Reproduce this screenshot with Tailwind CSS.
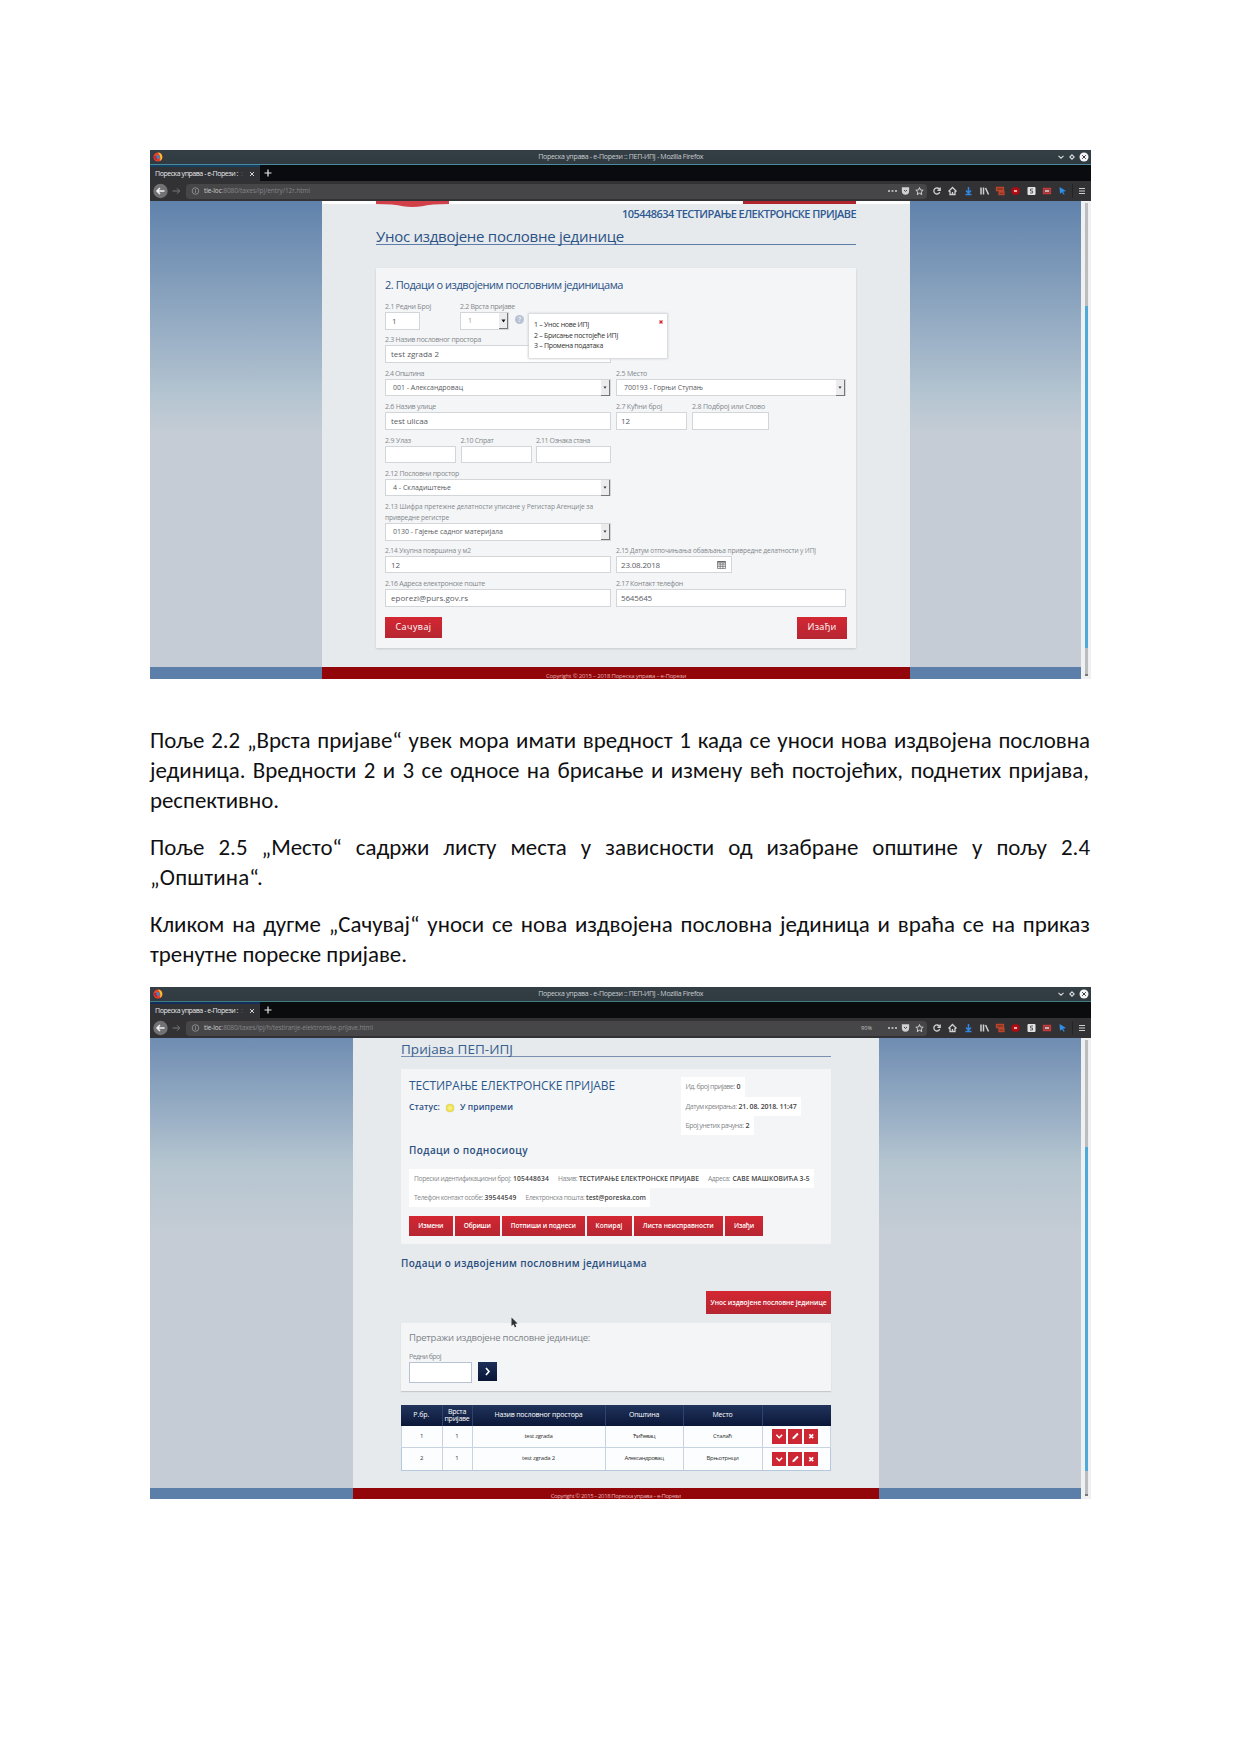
<!DOCTYPE html>
<html lang="ru">
<head>
<meta charset="utf-8">
<title>Упутство</title>
<script src="https://cdn.jsdelivr.net/npm/@tailwindcss/browser@4"></script>
</head>
<body class="bg-white">
<svg class="hidden">
  <symbol id="tools" viewBox="0 0 210 20">
    <g fill="none" stroke="#d0d0d2" stroke-width="1.3">
      <path d="M3 10h2M6.500 10h2M10 10h2" stroke-width="1.600"/>
      <path d="M17.500 7h6v3a3 3 0 0 1-6 0z" fill="#d0d0d2"/><path d="M19 9l1.500 1.500L22 9" stroke="#444" stroke-width="1"/>
      <path d="M34.500 6.500l1 2.500 2.700.2-2 1.800.6 2.600-2.300-1.400-2.300 1.400.6-2.600-2-1.800 2.700-.2z" stroke-width="1"/>
      <path d="M54.500 8.500a3 3 0 1 0 .2 2.500M55.200 6.500v2.800h-2.800"/>
      <path d="M63.500 10.500L67.500 6.500l4 4M65 10v3.500h5V10M67.500 13.500v-2.500"/>
      <path d="M83.500 6v6M81 9.500l2.500 2.700L86 9.500M80.500 13.500h6" stroke="#3385e0" stroke-width="1.500"/>
      <path d="M96 6.500v7M98.500 6.500v7M100.500 7l3 6.500" stroke-width="1.500"/>
      <path d="M111.500 6.500h7v3h-7zM114 11h5v2.500h-5z" stroke="#b8452c" fill="#83321f"/>
      <path d="M128.500 7h4l1.500 1.500v3l-1.500 1.500h-4l-1.500-1.500v-3z" stroke="#a80d12" fill="#b90d15"/><path d="M129 10h3" stroke="#fff"/>
      <rect x="142.500" y="6" width="8" height="8" rx="1" fill="#e3e3e5" stroke="none"/><path d="M148 8h-2.500v2h2v2H145" stroke="#555" stroke-width=".9"/>
      <path d="M158.500 7.500h7v5h-7z" stroke="#c23a3a" fill="#8d3b40"/><path d="M160 10h4" stroke="#eee"/>
      <path d="M174.500 6l6.500 4-3 .7 1.700 2.600-1 .5-1.700-2.500-2 1.500z" fill="#2f90e8" stroke="none"/>
      <path d="M187.500 3v14" stroke="#242426" stroke-width="1"/>
      <path d="M194 7.500h6M194 10h6M194 12.500h6" stroke-width="1.200"/>
    </g>
  </symbol>
  <symbol id="fox" viewBox="0 0 10 10"><circle cx="5" cy="5" r="4.600" fill="#e5452c"/><path d="M5 .6a4.400 4.400 0 0 1 2 8.200C8 6 7 3 5 .6z" fill="#f7c32e"/><circle cx="4.800" cy="5" r="2.100" fill="#4c7fb8"/><path d="M1 4c0 4 3 5 5 4-2 0-3-2-2.600-4z" fill="#c3202f"/></symbol>
  <symbol id="wm" viewBox="0 0 34 12"><path d="M1.500 4.800L4 7.200l2.500-2.400" fill="none" stroke="#d8dbdd" stroke-width="1.100"/><path d="M15 3.800L17.200 6 15 8.200 12.800 6z" fill="none" stroke="#d8dbdd" stroke-width="1.100"/><circle cx="27" cy="6" r="4.500" fill="#f5f5f5"/><path d="M25.200 4.200l3.600 3.600M28.800 4.200l-3.600 3.600" stroke="#333b41" stroke-width="1"/></symbol>
  <symbol id="nav" viewBox="0 0 62 20"><circle cx="10.500" cy="10" r="7.200" fill="#727274"/><path d="M14.500 10H7M10 7l-3 3 3 3" fill="none" stroke="#f2f2f2" stroke-width="1.500"/><path d="M22.500 10h7M27 7.300l2.700 2.700-2.700 2.700" fill="none" stroke="#77777a" stroke-width="1"/></symbol>
  <symbol id="bdown" viewBox="0 0 15 15"><path d="M4.500 6l3 3 3-3" fill="none" stroke="#fff" stroke-width="1.600"/></symbol>
  <symbol id="bedit" viewBox="0 0 15 15"><path d="M4.500 10.500l.5-2 4.500-4.500 1.500 1.500L6.500 10z" fill="#fff"/></symbol>
  <symbol id="bx" viewBox="0 0 15 15"><path d="M5.500 5.500l4 4M9.500 5.500l-4 4" stroke="#fff" stroke-width="1.700"/></symbol>
</svg>

<main class="w-[1241px] h-[1754px] overflow-hidden pt-[150px] pl-[150px] font-['Open_Sans','Noto_Sans',sans-serif]">

<!-- First browser window -->
<section class="w-[941px] h-[529px] overflow-hidden flex flex-col">
  <header class="h-[15px] shrink-0 bg-linear-to-b from-[#343f46] to-[#303a40] border-b border-[#4b8ba0] flex items-center justify-between">
    <svg class="w-[10px] h-[10px] ml-[2.500px]"><use href="#fox"/></svg>
    <span data-w="165" class="text-[7px] text-[#c9cdd0] whitespace-nowrap ml-[22px] pt-px">Пореска управа - е-Порези :: ПЕП-ИПЈ - Mozilla Firefox</span>
    <svg class="w-[34px] h-[12px]"><use href="#wm"/></svg>
  </header>
  <div class="h-[16px] shrink-0 bg-[#0a0b0f] flex items-center">
    <div class="w-[110px] h-full bg-[#303236] border-t-2 border-[#16405f] flex items-center pl-[5px] text-[7px] text-[#e8e8ea]"><span data-w="83" class="whitespace-nowrap">Пореска управа - е-Порези :</span><span class="text-[#666] ml-[3px]">:</span><svg class="w-[6px] h-[6px] ml-[6px]" viewBox="0 0 6 6"><path d="M1 1l4 4M5 1L1 5" stroke="#d5d5d5"/></svg></div>
    <svg class="w-[8px] h-[8px] ml-[4px]" viewBox="0 0 8 8"><path d="M4 .5v7M.5 4h7" stroke="#e8e8e8" stroke-width="1.200"/></svg>
  </div>
  <div class="h-[20px] shrink-0 bg-[#323234] flex items-center">
    <div class="w-[36px] h-full shrink-0 overflow-hidden"><svg class="w-[62px] h-[20px]"><use href="#nav"/></svg></div>
    <div class="h-[15px] w-[741px] shrink-0 rounded-sm bg-[#464648] flex items-center overflow-hidden"><svg class="w-[18px] h-[20px] shrink-0" viewBox="36 0 18 20"><circle cx="45.500" cy="10" r="3.300" fill="none" stroke="#9b9b9d" stroke-width=".8"/><path d="M45.500 9.500v2.200M45.500 8v.8" stroke="#9b9b9d" stroke-width=".9"/></svg><span data-w="106" class="text-[6.500px] text-[#858588] whitespace-nowrap"><b class="text-[#d0d0d2] font-normal">tie-loc</b>:8080/taxes/ipj/entry/12r.html</span></div>
    <svg class="w-[210px] h-[20px] -ml-[42px] shrink-0"><use href="#tools"/></svg>
  </div>
  <div class="flex-1 flex min-h-0">
    <div class="w-[172px] flex flex-col"><div class="h-[466px] bg-linear-to-b from-[#6082ab] via-[#b5c5d1] via-42% to-[#c5ccd5] to-50%"></div><div class="flex-1 bg-[#5b7fa9]"></div></div>
    <div class="w-[588px] bg-[#e6eaed] flex flex-col">
      <div class="h-[3px] shrink-0 bg-white px-[54px] flex justify-between"><svg class="w-[73px] h-[6px] shrink-0" viewBox="0 0 73 6"><path d="M0 0h73v3Q55 3 46 5.200Q36.500 6.800 27 5.200Q18 3 0 3z" fill="#d13f48"/></svg><div class="w-[113px] bg-[#b2242d]"></div></div>
      <div class="h-[18px] px-[54px] text-right text-[11px] leading-[20px] font-semibold text-[#2f5a92] whitespace-nowrap"><span data-w="234">105448634 ТЕСТИРАЊЕ ЕЛЕКТРОНСКЕ ПРИЈАВЕ</span></div>
      <h1 class="h-[23px] mx-[54px] border-b-[1.500px] border-[#5c7ea8] text-[15px] leading-[28px] text-[#2b5286] whitespace-nowrap"><span data-w="248">Унос издвојене пословне јединице</span></h1>
      <form class="relative mt-[23px] mx-[54px] w-[480px] h-[380px] shrink-0 bg-[#f3f5f7] shadow-[0_1px_2px_#0002] px-[9px] flex flex-col text-[#5a5c5f]">
        <h2 class="h-[33px] shrink-0 text-[11px] leading-[33px] text-[#2b5286] whitespace-nowrap font-medium"><span data-w="238">2. Подаци о издвојеним пословним јединицама</span></h2>
        <div class="h-[33.400px] shrink-0 flex">
          <div class="w-[75px]"><div class="h-[11px] text-[7px] leading-[11px] text-[#85888c] whitespace-nowrap"><span data-w="46">2.1 Редни Број</span></div><div class="w-[35px] h-[17.500px] bg-white border border-[#d3d6d9] text-[8px] leading-[16px] pl-[6px]">1</div></div>
          <div class="w-[49px]"><div class="h-[11px] text-[7px] leading-[11px] text-[#85888c] whitespace-nowrap"><span data-w="55">2.2 Врста пријаве</span></div><div class="w-[49px] h-[17.500px] bg-white border border-[#d3d6d9] text-[7px] leading-[15px] pl-[7px] flex justify-between text-[#999]">1<i class="w-[9px] h-[16px] bg-[#ececee] border-r border-b border-[#777] flex items-center justify-center"><svg class="w-[5px] h-[4px]" viewBox="0 0 5 4"><path d="M.5.5h4L2.500 3.500z" fill="#111"/></svg></i></div></div>
          <i class="not-italic w-[9px] h-[9px] ml-[6px] mt-[14px] rounded-full bg-[#b9c2d5] text-white text-[7px] leading-[9px] text-center">?</i>
        </div>
        <div class="h-[33.400px] shrink-0"><div class="h-[11px] text-[7px] leading-[11px] text-[#85888c]"><span data-w="96">2.3 Назив пословног простора</span></div><div class="w-[226px] h-[17.500px] bg-white border border-[#d3d6d9] text-[8px] leading-[16px] pl-[5px]"><span data-w="48">test zgrada 2</span></div></div>
        <div class="h-[33.400px] shrink-0 flex gap-[5px]">
          <div class="w-[226px]"><div class="h-[11px] text-[7px] leading-[11px] text-[#85888c]"><span data-w="39">2.4 Општина</span></div><div class="h-[17.500px] bg-white border border-[#d3d6d9] text-[7px] leading-[16px] pl-[7px] flex justify-between"><span data-w="70">001 - Александровац</span><i class="w-[9px] h-[16px] bg-[#ececee] border-r border-b border-[#777] flex items-center justify-center"><svg class="w-[4px] h-[3px]" viewBox="0 0 5 4"><path d="M.5.5h4L2.500 3.500z" fill="#333"/></svg></i></div></div>
          <div class="w-[230px]"><div class="h-[11px] text-[7px] leading-[11px] text-[#85888c]"><span data-w="31">2.5 Место</span></div><div class="h-[17.500px] bg-white border border-[#d3d6d9] text-[7px] leading-[16px] pl-[7px] flex justify-between"><span data-w="79">700193 - Горњи Ступањ</span><i class="w-[9px] h-[16px] bg-[#ececee] border-r border-b border-[#777] flex items-center justify-center"><svg class="w-[4px] h-[3px]" viewBox="0 0 5 4"><path d="M.5.5h4L2.500 3.500z" fill="#333"/></svg></i></div></div>
        </div>
        <div class="h-[33.400px] shrink-0 flex gap-[5px]">
          <div class="w-[226px]"><div class="h-[11px] text-[7px] leading-[11px] text-[#85888c]"><span data-w="51">2.6 Назив улице</span></div><div class="h-[17.500px] bg-white border border-[#d3d6d9] text-[8px] leading-[16px] pl-[5px]"><span data-w="37">test ulicaa</span></div></div>
          <div class="w-[71px]"><div class="h-[11px] text-[7px] leading-[11px] text-[#85888c]"><span data-w="46">2.7 Кућни број</span></div><div class="h-[17.500px] bg-white border border-[#d3d6d9] text-[8px] leading-[16px] pl-[4px]">12</div></div>
          <div class="w-[77px]"><div class="h-[11px] text-[7px] leading-[11px] text-[#85888c] whitespace-nowrap"><span data-w="73">2.8 Подброј или Слово</span></div><div class="h-[17.500px] bg-white border border-[#d3d6d9]"></div></div>
        </div>
        <div class="h-[33.400px] shrink-0 flex gap-[4.500px]">
          <div class="w-[71px]"><div class="h-[11px] text-[7px] leading-[11px] text-[#85888c]"><span data-w="26">2.9 Улаз</span></div><div class="h-[17.500px] bg-white border border-[#d3d6d9]"></div></div>
          <div class="w-[71px]"><div class="h-[11px] text-[7px] leading-[11px] text-[#85888c]"><span data-w="33">2.10 Спрат</span></div><div class="h-[17.500px] bg-white border border-[#d3d6d9]"></div></div>
          <div class="w-[75px]"><div class="h-[11px] text-[7px] leading-[11px] text-[#85888c]"><span data-w="54">2.11 Ознака стана</span></div><div class="h-[17.500px] bg-white border border-[#d3d6d9]"></div></div>
        </div>
        <div class="h-[33.400px] w-[226px] shrink-0"><div class="h-[11px] text-[7px] leading-[11px] text-[#85888c]"><span data-w="74">2.12 Пословни простор</span></div><div class="h-[17.500px] bg-white border border-[#d3d6d9] text-[7px] leading-[16px] pl-[7px] flex justify-between"><span data-w="58">4 - Складиштење</span><i class="w-[9px] h-[16px] bg-[#ececee] border-r border-b border-[#777] flex items-center justify-center"><svg class="w-[4px] h-[3px]" viewBox="0 0 5 4"><path d="M.5.5h4L2.500 3.500z" fill="#333"/></svg></i></div></div>
        <div class="h-[43.600px] w-[226px] shrink-0"><div class="h-[22px] text-[6.600px] leading-[11px] text-[#85888c] whitespace-nowrap"><span data-w="208">2.13 Шифра претежне делатности уписане у Регистар Агенције за</span><br><span data-w="64">привредне регистре</span></div><div class="h-[17.500px] bg-white border border-[#d3d6d9] text-[7px] leading-[16px] pl-[7px] flex justify-between"><span data-w="110">0130 - Гајење садног материјала</span><i class="w-[9px] h-[16px] bg-[#ececee] border-r border-b border-[#777] flex items-center justify-center"><svg class="w-[4px] h-[3px]" viewBox="0 0 5 4"><path d="M.5.5h4L2.500 3.500z" fill="#333"/></svg></i></div></div>
        <div class="h-[33.400px] shrink-0 flex gap-[5px]">
          <div class="w-[226px]"><div class="h-[11px] text-[6.600px] leading-[11px] text-[#85888c]"><span data-w="86">2.14 Укупна површина у м2</span></div><div class="h-[17.500px] bg-white border border-[#d3d6d9] text-[8px] leading-[16px] pl-[5px]">12</div></div>
          <div class="w-[230px]"><div class="h-[11px] text-[6.600px] leading-[11px] text-[#85888c] whitespace-nowrap"><span data-w="200">2.15 Датум отпочињања обављања привредне делатности у ИПЈ</span></div><div class="w-[116px] h-[17.500px] bg-white border border-[#d3d6d9] text-[8px] leading-[16px] pl-[4px] pr-[5px] flex justify-between items-center"><span data-w="39">23.08.2018</span><svg class="w-[9px] h-[9px]" viewBox="0 0 9 9"><path d="M.5 1.500h8v7h-8zM.5 3h8M.5 4.800h8M.5 6.600h8M3.200 3v5.500M5.900 3v5.500" fill="none" stroke="#68696c" stroke-width=".7"/><path d="M.5 1h8v1.500h-8z" fill="#68696c"/></svg></div></div>
        </div>
        <div class="h-[38.500px] shrink-0 flex gap-[5px]">
          <div class="w-[226px]"><div class="h-[11px] text-[7px] leading-[11px] text-[#85888c]"><span data-w="100">2.16 Адреса електронске поште</span></div><div class="h-[17.500px] bg-white border border-[#d3d6d9] text-[8px] leading-[16px] pl-[5px]"><span data-w="77">eporezi@purs.gov.rs</span></div></div>
          <div class="w-[230px]"><div class="h-[11px] text-[7px] leading-[11px] text-[#85888c]"><span data-w="67">2.17 Контакт телефон</span></div><div class="h-[17.500px] bg-white border border-[#d3d6d9] text-[8px] leading-[16px] pl-[4px]"><span data-w="31">5645645</span></div></div>
        </div>
        <div class="flex justify-between text-white font-medium text-[9px] leading-[20px]"><div class="w-[57px] h-[21px] bg-linear-to-b from-[#d42732] to-[#b52632] text-center"><span data-w="36">Сачувај</span></div><div class="w-[50px] h-[22px] bg-linear-to-b from-[#d42732] to-[#b52632] text-center"><span data-w="29">Изађи</span></div></div>
        <aside class="absolute left-[153px] top-[46px] w-[138px] h-[44px] bg-white shadow-[0_0_2px_1px_#cfd1d4] pl-[5px] pt-[6px] text-[7px] leading-[10.700px] text-[#333] whitespace-nowrap"><span data-w="55">1 – Унос нове ИПЈ</span><br><span data-w="84">2 – Брисање постојеће ИПЈ</span><br><span data-w="69">3 – Промена података</span><i class="absolute right-[4px] top-[6px] w-[4px] h-[4px] bg-[#d92e38] border border-[#efa0a5]"></i></aside>
      </form>
      <footer class="mt-[19px] flex-1 bg-[#92060a] text-center text-[6px] leading-[18px] text-[#e3b3b4] overflow-hidden whitespace-nowrap"><span data-w="140">Copyright © 2015 – 2018 Пореска управа – е-Порези</span></footer>
    </div>
    <div class="w-[171px] flex flex-col"><div class="h-[466px] bg-linear-to-b from-[#6082ab] via-[#b5c5d1] via-42% to-[#c5ccd5] to-50%"></div><div class="flex-1 bg-[#5b7fa9]"></div></div>
    <div class="w-[10px] bg-[#eff0f1] flex flex-col items-center pt-[2px] pb-[3px]"><div class="w-[3px] h-[103px] bg-[#bcbdbe]"></div><div class="w-[3px] h-[342px] bg-[#4faad8]"></div><div class="w-[3px] flex-1 bg-[#bcbdbe] border-b-2 border-[#777]"></div></div>
  </div>
</section>

<!-- Instructions -->
<article class="w-[940px] mt-[46px] h-[262px] font-['Carlito','Lato','Open_Sans',sans-serif] text-[22.900px] leading-[30px] text-[#101012] whitespace-nowrap">
  <p><span data-w="940" data-words="1">Поље 2.2 „Врста пријаве“ увек мора имати вредност 1 када се уноси нова издвојена пословна</span><br><span data-w="939" data-words="1">јединица. Вредности 2 и 3 се односе на брисање и измену већ постојећих, поднетих пријава,</span><br><span data-w="129">респективно.</span></p>
  <p class="mt-[17px]"><span data-w="940" data-words="1">Поље 2.5 „Место“ садржи листу места у зависности од изабране општине у пољу 2.4</span><br><span data-w="113">„Општина“.</span></p>
  <p class="mt-[17px]"><span data-w="940" data-words="1">Кликом на дугме „Сачувај“ уноси се нова издвојена пословна јединица и враћа се на приказ</span><br><span data-w="257">тренутне пореске пријаве.</span></p>
</article>

<!-- Second browser window -->
<section class="relative w-[941px] h-[512px] overflow-hidden flex flex-col">
  <header class="h-[15px] shrink-0 bg-linear-to-b from-[#343f46] to-[#303a40] border-b border-[#3c8083] flex items-center justify-between">
    <svg class="w-[10px] h-[10px] ml-[2.500px]"><use href="#fox"/></svg>
    <span data-w="165" class="text-[7px] text-[#c9cdd0] whitespace-nowrap ml-[22px] pt-px">Пореска управа - е-Порези :: ПЕП-ИПЈ - Mozilla Firefox</span>
    <svg class="w-[34px] h-[12px]"><use href="#wm"/></svg>
  </header>
  <div class="h-[16px] shrink-0 bg-[#0b0c0d] flex items-center">
    <div class="w-[110px] h-full bg-[#303236] border-t-2 border-[#152d5c] flex items-center pl-[5px] text-[7px] text-[#e8e8ea]"><span data-w="83" class="whitespace-nowrap">Пореска управа - е-Порези :</span><span class="text-[#666] ml-[3px]">:</span><svg class="w-[6px] h-[6px] ml-[6px]" viewBox="0 0 6 6"><path d="M1 1l4 4M5 1L1 5" stroke="#d5d5d5"/></svg></div>
    <svg class="w-[8px] h-[8px] ml-[4px]" viewBox="0 0 8 8"><path d="M4 .5v7M.5 4h7" stroke="#e8e8e8" stroke-width="1.200"/></svg>
  </div>
  <div class="h-[20px] shrink-0 bg-[#323234] flex items-center">
    <div class="w-[36px] h-full shrink-0 overflow-hidden"><svg class="w-[62px] h-[20px]"><use href="#nav"/></svg></div>
    <div class="h-[15px] w-[741px] shrink-0 rounded-sm bg-[#464648] flex items-center overflow-hidden"><svg class="w-[18px] h-[20px] shrink-0" viewBox="36 0 18 20"><circle cx="45.500" cy="10" r="3.300" fill="none" stroke="#9b9b9d" stroke-width=".8"/><path d="M45.500 9.500v2.200M45.500 8v.8" stroke="#9b9b9d" stroke-width=".9"/></svg><span data-w="169" class="text-[6.500px] text-[#858588] whitespace-nowrap"><b class="text-[#d0d0d2] font-normal">tie-loc</b>:8080/taxes/ipj/h/testiranje-elektronske-prijave.html</span><span data-w="11" class="ml-auto mr-[55px] text-[5.500px] text-[#c5c5c5]">90%</span></div>
    <svg class="w-[210px] h-[20px] -ml-[42px] shrink-0"><use href="#tools"/></svg>
  </div>
  <div class="flex-1 flex min-h-0">
    <div class="w-[202.500px] flex flex-col"><div class="h-[450px] bg-linear-to-b from-[#6f8db2] via-[#b5c5d0] via-28% to-[#c5ccd5] to-44%"></div><div class="flex-1 bg-[#5b7fa9]"></div></div>
    <div class="w-[526.500px] bg-[#e6eaed] flex flex-col">
      <h1 class="h-[19px] shrink-0 mx-[48.500px] border-b-[1.500px] border-[#7990b0] text-[13.500px] leading-[22px] text-[#37608f] whitespace-nowrap"><span data-w="112">Пријава ПЕП-ИПЈ</span></h1>
      <div class="mt-[12px] mx-[48.500px] w-[430px] h-[175px] shrink-0 bg-[#f3f5f7] px-[8px] flex flex-col">
        <div class="flex h-[100px] shrink-0">
          <div class="w-[272px]">
            <h2 class="h-[30px] pt-[7px] text-[12px] leading-[19px] text-[#2c578a] whitespace-nowrap"><span data-w="206">ТЕСТИРАЊЕ ЕЛЕКТРОНСКЕ ПРИЈАВЕ</span></h2>
            <div class="h-[17px] flex items-center text-[8.500px] font-semibold text-[#2b4f86] whitespace-nowrap"><span data-w="31">Статус:</span><i class="w-[8px] h-[8px] rounded-full ml-[6px] mr-[6px] bg-[radial-gradient(circle,#fff79a,#dccb12)] shadow-[0_0_1px_#aaa]"></i><span data-w="53">У припреми</span></div>
            <h3 class="mt-[25px] text-[10px] leading-[19px] font-semibold text-[#2b4f7f] whitespace-nowrap"><span data-w="119">Подаци о подносиоцу</span></h3>
          </div>
          <div class="pt-[8px] text-[7px] leading-[19px] text-[#85888b] whitespace-nowrap">
            <div class="w-[64px] h-[19.500px] bg-white pl-[4.500px] flex gap-[2px]"><span data-w="49">Ид. број пријаве:</span><b data-w="4" class="font-semibold text-[#444]">0</b></div>
            <div class="w-[120px] h-[19px] bg-white pl-[4.500px] flex gap-[2px]"><span data-w="51">Датум креирања:</span><b data-w="58" class="font-semibold text-[#444]">21. 08. 2018. 11:47</b></div>
            <div class="w-[73px] h-[19px] bg-white pl-[4.500px] flex gap-[2px]"><span data-w="58">Број унетих рачуна:</span><b data-w="4" class="font-semibold text-[#444]">2</b></div>
          </div>
        </div>
        <div class="text-[6.700px] leading-[19px] text-[#85888b] whitespace-nowrap">
          <div class="w-[405px] h-[19px] bg-white pl-[5px] flex"><span data-w="97">Порески идентификациони број:</span><b data-w="36" class="ml-[2px] font-semibold text-[#444]">105448634</b><span data-w="19" class="ml-[9px]">Назив:</span><b data-w="120" class="ml-[2px] font-semibold text-[#444]">ТЕСТИРАЊЕ ЕЛЕКТРОНСКЕ ПРИЈАВЕ</b><span data-w="22" class="ml-[9px]">Адреса:</span><b data-w="77" class="ml-[2.500px] font-semibold text-[#444]">САВЕ МАШКОВИЋА 3-5</b></div>
          <div class="w-[241px] h-[19px] bg-white pl-[5px] flex"><span data-w="69">Телефон контакт особе:</span><b data-w="32" class="ml-[1.500px] font-semibold text-[#444]">39544549</b><span data-w="59" class="ml-[9px]">Електронска пошта:</span><b data-w="60" class="ml-[1.500px] font-semibold text-[#444]">test@poreska.com</b></div>
        </div>
        <div class="mt-[9px] flex gap-[2px] text-[6.500px] leading-[19px] font-semibold text-white text-center whitespace-nowrap">
          <div class="w-[43.500px] h-[20px] bg-linear-to-b from-[#d42732] to-[#b52632]"><span data-w="25">Измени</span></div>
          <div class="w-[45.500px] h-[20px] bg-linear-to-b from-[#d42732] to-[#b52632]"><span data-w="27">Обриши</span></div>
          <div class="w-[82.500px] h-[20px] bg-linear-to-b from-[#d42732] to-[#b52632]"><span data-w="65">Потпиши и поднеси</span></div>
          <div class="w-[45px] h-[20px] bg-linear-to-b from-[#d42732] to-[#b52632]"><span data-w="27">Копирај</span></div>
          <div class="w-[89.500px] h-[20px] bg-linear-to-b from-[#d42732] to-[#b52632]"><span data-w="71">Листа неисправности</span></div>
          <div class="w-[38px] h-[20px] bg-linear-to-b from-[#d42732] to-[#b52632]"><span data-w="20">Изађи</span></div>
        </div>
      </div>
      <h3 class="mt-[9px] h-[20px] mx-[48.500px] text-[10px] leading-[20px] font-semibold text-[#2b4f7f] whitespace-nowrap"><span data-w="246">Подаци о издвојеним пословним јединицама</span></h3>
      <div class="mt-[18px] ml-[353.500px] w-[125px] h-[23px] bg-linear-to-b from-[#d42732] to-[#b52632] text-white text-center text-[6.600px] leading-[23px] font-semibold whitespace-nowrap"><span data-w="116">Унос издвојене пословне јединице</span></div>
      <div class="mt-[9px] mx-[48.500px] w-[430px] h-[68px] shrink-0 bg-[#f3f5f7] shadow-[0_1px_1px_#0002] px-[8px] pt-[5px]">
        <div class="text-[9.500px] leading-[20px] text-[#808387] whitespace-nowrap"><span data-w="181">Претражи издвојене пословне јединице:</span></div>
        <div class="mt-[3px] h-[11px] text-[7px] leading-[11px] text-[#85888c]"><span data-w="32">Редни број</span></div>
        <div class="flex gap-[6px]"><div class="w-[63px] h-[21px] bg-white border border-[#b9c2d4]"></div><svg class="w-[19px] h-[19px] bg-linear-to-b from-[#1c2f59] to-[#0a1638]" viewBox="0 0 19 19"><path d="M8 6l3 3.500L8 13" fill="none" stroke="#fff" stroke-width="1.600"/></svg></div>
      </div>
      <div class="mt-[14px] mx-[48.500px] w-[430px] shrink-0 grid grid-cols-[41.500px_30px_133px_78px_79px_68.500px] text-center text-[6px] text-[#333]">
        <div class="col-span-6 grid grid-cols-subgrid h-[21px] items-center bg-linear-to-b from-[#22345d] to-[#0a1738] text-white text-[7px] leading-[6.500px] font-medium whitespace-nowrap divide-x divide-[#2f4270] *:h-full *:content-center"><div><span data-w="16">Р.бр.</span></div><div><span data-w="18">Врста</span><br><span data-w="25">пријаве</span></div><div><span data-w="88">Назив пословног простора</span></div><div><span data-w="30">Општина</span></div><div><span data-w="20">Место</span></div><div></div></div>
        <div class="col-span-6 grid grid-cols-subgrid h-[22px] bg-[#fcfdfe] border-x border-b border-[#c7d3df] divide-x divide-[#c7d3df] *:content-center"><div>1</div><div>1</div><div><span data-w="28">test zgrada</span></div><div><span data-w="22">Ћићевац</span></div><div><span data-w="19">Сталаћ</span></div><div class="pl-[9px] flex items-center gap-[1.500px]"><svg class="size-[14.500px] bg-[#cd2733]"><use href="#bdown"/></svg><svg class="size-[14.500px] bg-[#cd2733]"><use href="#bedit"/></svg><svg class="size-[14.500px] bg-[#cd2733]"><use href="#bx"/></svg></div></div>
        <div class="col-span-6 grid grid-cols-subgrid h-[22.500px] bg-[#fcfdfe] border-x border-b border-[#b4c7db] divide-x divide-[#c7d3df] *:content-center"><div>2</div><div>1</div><div><span data-w="33">test zgrada 2</span></div><div><span data-w="39">Александровац</span></div><div><span data-w="32">Врњотрнци</span></div><div class="pl-[9px] flex items-center gap-[1.500px]"><svg class="size-[14.500px] bg-[#cd2733]"><use href="#bdown"/></svg><svg class="size-[14.500px] bg-[#cd2733]"><use href="#bedit"/></svg><svg class="size-[14.500px] bg-[#cd2733]"><use href="#bx"/></svg></div></div>
      </div>
      <footer class="mt-auto h-[11px] shrink-0 bg-[#92060a] text-center text-[6px] leading-[16px] text-[#e3b3b4] overflow-hidden whitespace-nowrap"><span data-w="130">Copyright © 2015 – 2018 Пореска управа – е-Порези</span></footer>
    </div>
    <div class="w-[202px] flex flex-col"><div class="h-[450px] bg-linear-to-b from-[#6f8db2] via-[#b5c5d0] via-28% to-[#c5ccd5] to-44%"></div><div class="flex-1 bg-[#5b7fa9]"></div></div>
    <div class="w-[10px] bg-[#eff0f1] flex flex-col items-center pt-[2px] pb-[3px]"><div class="w-[3px] h-[107px] bg-[#bcbdbe]"></div><div class="w-[3px] h-[324px] bg-[#4faad8]"></div><div class="w-[3px] flex-1 bg-[#bcbdbe] border-b-2 border-[#777]"></div></div>
  </div>
  <svg class="absolute left-[361px] top-[330px] w-[7px] h-[11px]" viewBox="0 0 7 11"><path d="M.5.5v8.500l2-1.700 1.300 3 1.500-.6-1.200-3 2.500-.2z" fill="#303236"/></svg>
</section>
</main>
<script>
// Set each label's tracking so that it fills the width given in data-w.
function fitLabels() {
  document.querySelectorAll('[data-w]').forEach(el => {
    el.style.letterSpacing = el.style.wordSpacing = '';
    const r = document.createRange();
    r.selectNodeContents(el);
    const extra = +el.dataset.w - r.getBoundingClientRect().width;
    const text = el.textContent;
    if (el.dataset.words) el.style.wordSpacing = extra / (text.split(' ').length - 1) + 'px';
    else el.style.letterSpacing = extra / text.length + 'px';
  });
}
fitLabels();
addEventListener('load', fitLabels);
document.fonts.ready.then(fitLabels);
new ResizeObserver(fitLabels).observe(document.querySelector('main'));
</script>
</body>
</html>
